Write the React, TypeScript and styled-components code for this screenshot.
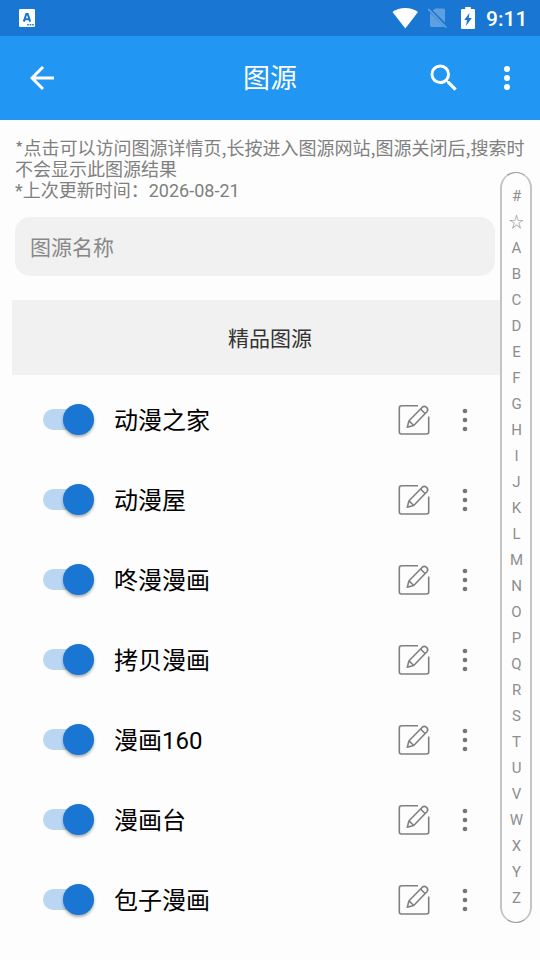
import React, { useState } from "react";
import styled, { createGlobalStyle } from "styled-components";

const GlobalStyle = createGlobalStyle`
  * { box-sizing: border-box; }
  body {
    margin: 0;
    background: #fdfdfd;
    font-family: Roboto, "Noto Sans CJK SC", sans-serif;
  }
  button { padding: 0; border: 0; background: none; color: inherit; font: inherit; display: block; }
  svg { display: block; }
`;

const Screen = styled.div`
  position: relative;
  width: 540px;
  height: 960px;
  overflow: hidden;
  background: #fdfdfd;
`;

const StatusBar = styled.div`
  height: 36px;
  display: flex;
  align-items: center;
  justify-content: space-between;
  padding: 0 13px 0 19px;
  background: #1976d2;
  color: #fff;
`;

const StatusIcons = styled.div`
  display: grid;
  grid-template-columns: 36px 33px 25px 41px;
  align-items: center;
`;

const Clock = styled.span`
  font-size: 21px;
  line-height: 36px;
  font-weight: 500;
  padding-top: 1px;
`;

const AppBar = styled.header`
  height: 84px;
  display: grid;
  grid-template-columns: 84px 372px 84px;
  align-items: center;
  background: #2196f3;
  color: #fff;
`;

const BackButton = styled.button`
  justify-self: center;
`;

const Title = styled.h1`
  margin: 0;
  padding-top: 2px;
  font-size: 27px;
  line-height: 40px;
  font-weight: 400;
  text-align: center;
`;

const Actions = styled.div`
  display: flex;
  justify-content: flex-end;
  align-items: center;
  gap: 42px;
  padding-right: 30px;
`;

const Notes = styled.div`
  padding: 17px 15px 0;
  height: 97px;
  font-size: 18px;
  line-height: 21px;
  color: #808080;
`;

const HelpNote = styled.p`
  margin: 0 0 1px;
  font-family: "Noto Sans CJK SC", sans-serif;
`;

const UpdateNote = styled.p`
  margin: 0;
`;

const SearchField = styled.input`
  display: block;
  width: 480px;
  height: 59px;
  margin: 0 0 24px 15px;
  padding: 2px 15px 0;
  border: 0;
  border-radius: 15px;
  outline: 0;
  background: #f1f1f1;
  font: 400 21px Roboto, "Noto Sans CJK SC", sans-serif;
  color: #333;
  &::placeholder { color: #888; opacity: 1; }
`;

const SectionHeader = styled.h2`
  margin: 0 12px 5px;
  height: 75px;
  line-height: 78px;
  font-size: 21px;
  font-weight: 400;
  text-align: center;
  color: #333;
  background: #f1f1f1;
`;

const SourceRow = styled.div`
  height: 80px;
  display: flex;
  align-items: center;
  padding-left: 43px;
`;

const Switch = styled.button<{ $on: boolean }>`
  width: 51px;
  height: 21px;
  margin-bottom: 1px;
  display: flex;
  align-items: center;
  justify-content: ${(p) => (p.$on ? "flex-end" : "flex-start")};
  background: linear-gradient(${(p) => (p.$on ? "#bad6f2, #bad6f2" : "#ccc, #ccc")}) left / 41px 21px no-repeat;
  border-radius: 11px;
`;

const Thumb = styled.span<{ $on: boolean }>`
  width: 31px;
  height: 31px;
  flex: none;
  border-radius: 50%;
  background: ${(p) => (p.$on ? "#1976d2" : "#fafafa")};
  box-shadow: 0 2px 3px rgba(0, 0, 0, 0.32);
`;

const SourceName = styled.span`
  width: 283px;
  margin-left: 20px;
  padding-top: 2px;
  font-size: 24px;
  line-height: 36px;
  color: #000;
`;

const IconButton = styled.button`
  margin-left: 1px;
`;

const MoreButton = styled.button`
  margin-left: 32px;
`;

const IndexBar = styled.nav`
  position: absolute;
  top: 172px;
  left: 500px;
  width: 32px;
  height: 751px;
  padding-top: 10px;
  border: solid;
  border-width: 1px 2px;
  border-color: #999 #c4c4c4;
  border-radius: 16px;
  background: #fdfdfd;
  display: flex;
  flex-direction: column;
`;

const IndexItem = styled.span`
  height: 26px;
  line-height: 26px;
  padding-left: 1px;
  font-size: 15px;
  text-align: center;
  color: #8e8e8e;
`;

const InputMethodIcon = () => (
  <svg width="16" height="18" viewBox="0 0 16 18">
    <rect width="16" height="18" rx="1.2" fill="#fff" />
    <path d="M4.8 12.600 7.300 5h1.400l2.500 7.600M5.800 10.200h4.400" fill="none" stroke="#1976d2" strokeWidth="2" />
    <path d="M8.200 15.800h6.600" stroke="#1976d2" strokeWidth="1.500" strokeDasharray="1.6 .9" />
  </svg>
);

const WifiIcon = () => (
  <svg width="27" height="22" viewBox="0 0 27 22">
    <path d="M.5 5C4 2.300 8.500 1 13.300 1S22.500 2.300 26 5L13.300 21.500Z" fill="#fff" />
  </svg>
);

const NoSimIcon = () => (
  <svg width="20" height="22" viewBox="0 0 20 22">
    <path d="M7.200 1.500H15.500q1.500 0 1.500 1.500V15.500L4.800 3.500ZM2 5.500 16 19.500q-.5.500-1 .500H3.500q-1.500 0-1.500-1.500Z" fill="#5e9fdf" />
    <path d="M.3 2 18.500 20.700" stroke="#6ba6e2" strokeWidth="1.400" />
  </svg>
);

const BatteryIcon = () => (
  <svg width="14" height="22" viewBox="0 0 14 22">
    <path d="M4.200 0h5.600v2H13q1 0 1 1v18q0 1-1 1H1q-1 0-1-1V3q0-1 1-1h3.200Z" fill="#fff" />
    <path d="M8.500 6 3.200 13h2.800l-1 6L10.800 11H7.700Z" fill="#1976d2" />
  </svg>
);

const BackIcon = () => (
  <svg width="36" height="36" viewBox="0 0 36 36" fill="none" stroke="#fff" strokeWidth="2.900">
    <path d="M30 18H8M19 7 8 18l11 11" />
  </svg>
);

const SearchIcon = () => (
  <svg width="36" height="36" viewBox="0 0 24 24" fill="#fff">
    <path d="M15.500 14h-.79l-.28-.27A6.471 6.471 0 0 0 16 9.500 6.500 6.500 0 1 0 9.500 16c1.610 0 3.090-.59 4.230-1.570l.27.280v.790l5 4.990L20.490 19l-4.990-5zm-6 0C7.010 14 5 11.990 5 9.500S7.010 5 9.500 5 14 7.010 14 9.500 11.990 14 9.500 14z" />
  </svg>
);

const MenuDots = ({ radius, fill }: { radius: number; fill: string }) => (
  <svg width="6" height="26" viewBox="0 0 6 26" fill={fill}>
    <circle cx="3" cy="4" r={radius} />
    <circle cx="3" cy="13" r={radius} />
    <circle cx="3" cy="22" r={radius} />
  </svg>
);

const EditIcon = () => (
  <svg width="32" height="32" viewBox="0 0 32 32" fill="none" stroke="#808080" strokeWidth="1.600">
    <path d="M20 1.700H3.500Q1.300 1.700 1.300 4v24q0 2 2.200 2h25q2.200 0 2.200-2V12.500" />
    <path d="m9.300 23.200 1.700-6.500L24.300 3.200q1.900-1.700 4.200.2t.4 4.400L15.700 21.500Z" strokeLinejoin="round" />
    <path d="m22.500 5 4.800 4.700M11 16.900l4.700 4.600" />
  </svg>
);

const sources = ["动漫之家", "动漫屋", "咚漫漫画", "拷贝漫画", "漫画160", "漫画台", "包子漫画"];
const indexLabels = ["#", "☆", ..."ABCDEFGHIJKLMNOPQRSTUVWXYZ"];

const Source = ({ name }: { name: string }) => {
  const [on, setOn] = useState(true);
  return (
    <SourceRow>
      <Switch $on={on} role="switch" aria-checked={on} onClick={() => setOn(!on)}>
        <Thumb $on={on} />
      </Switch>
      <SourceName>{name}</SourceName>
      <IconButton><EditIcon /></IconButton>
      <MoreButton><MenuDots radius={2.3} fill="#757575" /></MoreButton>
    </SourceRow>
  );
};

export default function App() {
  return (
    <Screen>
      <GlobalStyle />
      <StatusBar>
        <InputMethodIcon />
        <StatusIcons>
          <WifiIcon />
          <NoSimIcon />
          <BatteryIcon />
          <Clock>9:11</Clock>
        </StatusIcons>
      </StatusBar>
      <AppBar>
        <BackButton><BackIcon /></BackButton>
        <Title>图源</Title>
        <Actions>
          <button><SearchIcon /></button>
          <button><MenuDots radius={3} fill="#fff" /></button>
        </Actions>
      </AppBar>
      <Notes>
        <HelpNote>*点击可以访问图源详情页,长按进入图源网站,图源关闭后,搜索时不会显示此图源结果</HelpNote>
        <UpdateNote>*上次更新时间：2026-08-21</UpdateNote>
      </Notes>
      <SearchField placeholder="图源名称" />
      <SectionHeader>精品图源</SectionHeader>
      {sources.map((name) => <Source key={name} name={name} />)}
      <IndexBar>
        {indexLabels.map((label) => <IndexItem key={label}>{label}</IndexItem>)}
      </IndexBar>
    </Screen>
  );
}
